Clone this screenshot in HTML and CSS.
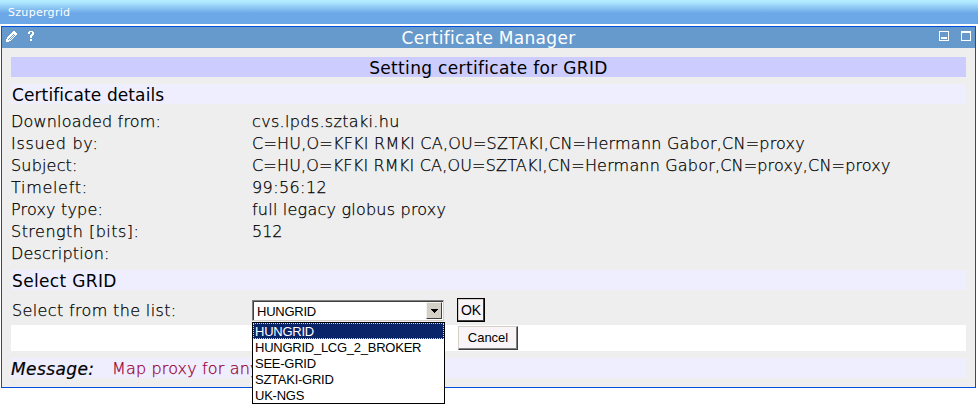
FILE: index.html
```html
<!DOCTYPE html>
<html lang="en">
<head>
<meta charset="utf-8">
<title>Certificate Manager</title>
<link rel="stylesheet" href="styles.css">
</head>
<body>
<header class="tabbar"><span class="tab">Szupergrid</span></header>
<main class="portlet">
  <div class="titlebar">
    <div class="tools">
      <svg class="pencil" width="11" height="11" viewBox="0 0 11 11" shape-rendering="crispEdges"><path fill="#fff" d="M7 0h2v1h1v1h1v2h-1v1h-1v1h-1v1h-1v1h-1v1h-1v1H3v1H0V8h1V6h1V5h1V4h1V3h1V2h1V1h1z"/><path fill="#6699cc" d="M7 3h1v1H7zM6 4h1v1H6zM8 4h1v1H8zM5 5h1v1H5zM7 5h1v1H7zM4 6h1v1H4zM6 6h1v1H6zM3 7h1v1H3zM5 7h1v1H5zM2 8h1v1H2zM4 8h1v1H4z"/></svg>
      <svg class="help" width="6" height="10" viewBox="0 0 6 10" shape-rendering="crispEdges"><path fill="#fff" d="M1 0h4v1h1v3H5v1H4v2H2V4h1V3h1V1H2v2H0V1h1zM2 8h2v2H2z"/></svg>
    </div>
    <h1 class="title">Certificate Manager</h1>
    <div class="tools right">
      <svg width="10" height="10" viewBox="0 0 10 10" shape-rendering="crispEdges"><path fill="#fff" fill-rule="evenodd" d="M0 0h10v10H0zM1 1v8h8V1zM2 6h6v2H2z"/></svg>
      <svg width="10" height="10" viewBox="0 0 10 10" shape-rendering="crispEdges"><path fill="#fff" fill-rule="evenodd" d="M0 0h10v10H0zM1 2v7h8V2z"/></svg>
    </div>
  </div>
  <div class="content">
    <h2 class="banner">Setting certificate for GRID</h2>
    <h3 class="section">Certificate details</h3>
    <dl class="details">
      <dt>Downloaded from:</dt><dd class="host">cvs.lpds.sztaki.hu</dd>
      <dt class="wide">Issued by:</dt><dd class="dn">C=HU,O=KFKI RMKI CA,OU=SZTAKI,CN=Hermann Gabor,CN=proxy</dd>
      <dt>Subject:</dt><dd class="dn long">C=HU,O=KFKI RMKI CA,OU=SZTAKI,CN=Hermann Gabor,CN=proxy,CN=proxy</dd>
      <dt class="wide">Timeleft:</dt><dd class="time">99:56:12</dd>
      <dt>Proxy type:</dt><dd class="type">full legacy globus proxy</dd>
      <dt class="medium">Strength [bits]:</dt><dd>512</dd>
      <dt>Description:</dt><dd></dd>
    </dl>
    <h3 class="section select-title">Select GRID</h3>
    <div class="choose">
      <span class="label">Select from the list:</span>
      <div class="combo">
        <span class="value">HUNGRID</span>
        <span class="arrow"><svg width="7" height="4" viewBox="0 0 7 4" shape-rendering="crispEdges"><path d="M0 0h7v1H6v1H5v1H4v1H3V3H2V2H1V1H0z"/></svg></span>
        <ul class="list">
          <li class="selected">HUNGRID</li>
          <li>HUNGRID_LCG_2_BROKER</li>
          <li>SEE-GRID</li>
          <li>SZTAKI-GRID</li>
          <li>UK-NGS</li>
        </ul>
      </div>
      <button class="ok">OK</button>
    </div>
    <div class="cancel-row"><button class="cancel">Cancel</button></div>
    <div class="message"><span class="message-label">Message:</span><span class="message-text">Map proxy for any</span></div>
  </div>
</main>
</body>
</html>
```
FILE: styles.css
```css
* { box-sizing: border-box; }
body {
  margin: 0;
  height: 405px;
  overflow: hidden;
  background: #fff;
  color: #000;
  font: 200 16px/22px "DejaVu Sans", Verdana, sans-serif;
}
h1, h2, h3, dl, dd, ul { margin: 0; padding: 0; }
.tabbar {
  height: 24px;
  padding-left: 8px;
  background: linear-gradient(#b5eeff 0, #b0e8ff 2px, #6ca8e8 13px);
  color: #fff;
  font-size: 11px;
  font-weight: 400;
  letter-spacing: 0.3px;
  line-height: 25px;
}
.portlet {
  width: 975px;
  height: 362px;
  margin: 2px 0 0 1px;
  border: 1px solid #0050e0;
  background: #eee;
}
.titlebar {
  display: flex;
  justify-content: space-between;
  height: 21px;
  padding: 0 4px 0 4px;
  background: #6699cc;
}
.tools { display: flex; width: 60px; padding-top: 4px; }
.pencil { margin-right: 11px; }
.tools.right { justify-content: flex-end; gap: 12px; }
.title {
  color: #fff;
  font-size: 17px;
  font-weight: 400;
  letter-spacing: 0.3px;
  line-height: 22px;
}
.content { padding: 9px 9px 0; }
.banner, .section {
  height: 20px;
  font-size: 17px;
  font-weight: 400;
  line-height: 22px;
}
.banner {
  margin-bottom: 7px;
  background: #ccccff;
  letter-spacing: 0.33px;
  text-align: center;
}
.section { padding-left: 1px; background: #eeeeff; letter-spacing: 0.1px; }
.select-title { letter-spacing: 0.35px; }
.details {
  display: grid;
  grid-template-columns: 240px 1fr;
  grid-auto-rows: 22px;
  padding: 7px 0 5px 0;
}
.details, .label, .message-text { -webkit-text-stroke: 0.25px; }
.details dt { letter-spacing: 0.18px; }
.details .wide { letter-spacing: 0.7px; }
.details .medium { letter-spacing: 0.47px; }
.details dd { padding-left: 1px; white-space: nowrap; }
.details .host { letter-spacing: 0.33px; }
.details .dn { letter-spacing: 0.22px; }
.details .long { letter-spacing: 0.18px; }
.details .time { letter-spacing: 0.4px; }
.details .type { letter-spacing: 0.22px; }
.choose { display: flex; height: 35px; padding: 7px 0 0 1px; }
.label { width: 240px; letter-spacing: 0.36px; line-height: 28px; }
.combo {
  position: relative;
  display: flex;
  width: 192px;
  height: 21px;
  margin-top: 3px;
  border: 1px solid;
  border-color: #808080 #d4d0c8 #d4d0c8 #808080;
  box-shadow: inset 1px 1px #404040;
  background: #fff;
  font: 400 13px/21px "Liberation Sans", Arial, sans-serif;
  letter-spacing: -0.25px;
}
.value { flex: 1; padding-left: 4px; }
.arrow {
  display: flex;
  align-items: center;
  justify-content: center;
  width: 16px;
  height: 17px;
  margin: 1px;
  border: 1px solid;
  border-color: #f4f2ee #404040 #404040 #f4f2ee;
  background: #d4d0c8;
}
.list {
  position: absolute;
  z-index: 2;
  top: 21px;
  left: -1px;
  width: 193px;
  height: 82px;
  border: 1px solid #000;
  background: #fff;
  list-style: none;
  line-height: 17px;
}
.list li { height: 16px; padding-left: 2px; }
.list .selected {
  padding-left: 1px;
  border: 1px dotted #f0d890;
  background: #0a246a;
  color: #fff;
  line-height: 15px;
}
button {
  padding: 0;
  border: 1px solid;
  border-color: #d4d0c8 #404040 #404040 #d4d0c8;
  background: #f8f4f8;
  box-shadow: inset -1px -1px #808080;
  color: #000;
  font: 400 14px/16px "Liberation Sans", Arial, sans-serif;
}
.ok {
  width: 28px;
  height: 24px;
  margin: 1px 0 0 13px;
  padding-bottom: 1px;
  border-color: #000;
  box-shadow: inset -1px -1px #404040, inset 1px 1px #d4d0c8;
}
.cancel-row { height: 26px; padding: 1px 0 0 447px; background: #fff; }
.cancel {
  display: block;
  width: 60px;
  height: 24px;
  padding-bottom: 1px;
  font-size: 13px;
}
.message {
  display: flex;
  height: 20px;
  margin-top: 7px;
  padding-left: 0;
  background: #eeeeff;
  line-height: 21px;
}
.message-label {
  width: 101px;
  font-size: 17px;
  font-style: italic;
  font-weight: 400;
  letter-spacing: 0.4px;
  line-height: 22px;
  -webkit-text-stroke: 0.2px;
}
.message-text { color: #990033; letter-spacing: 0.15px; white-space: nowrap; }
```
